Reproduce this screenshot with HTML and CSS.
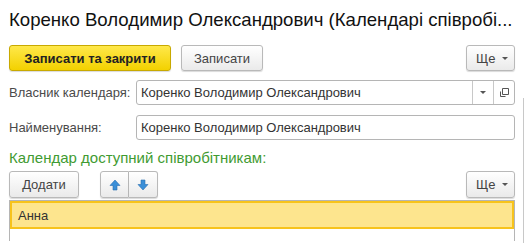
FILE: index.html
```html
<!DOCTYPE html>
<html>
<head>
<meta charset="utf-8">
<link rel="stylesheet" href="styles.css">
</head>
<body>
<div class="page">
  <h1 class="title">Коренко Володимир Олександрович (Календарі співробі...</h1>
  <div class="toolbar">
    <button class="btn btn-primary">Записати та закрити</button>
    <button class="btn btn-save">Записати</button>
    <span class="spacer"></span>
    <button class="btn btn-more">Ще <span class="caret"></span></button>
  </div>
  <div class="form">
    <div class="field">
      <label class="label">Власник календаря:</label>
      <div class="input">
        <span class="value">Коренко Володимир Олександрович</span>
        <span class="seg"><span class="caret"></span></span>
        <span class="seg"><svg width="11" height="11" viewBox="0 0 11 11"><path d="M3.5 1.5h6v6h-6z M1.5 4.5v5h5" fill="none" stroke="#555" stroke-width="1"/></svg></span>
      </div>
    </div>
    <div class="field">
      <label class="label">Найменування:</label>
      <div class="input">
        <span class="value">Коренко Володимир Олександрович</span>
      </div>
    </div>
  </div>
  <div class="group-title">Календар доступний співробітникам:</div>
  <div class="toolbar toolbar2">
    <button class="btn btn-add">Додати</button>
    <div class="btn-group">
      <button class="btn btn-icon"><svg width="12" height="12" viewBox="0 0 12 12"><path d="M6 1L11 6.5H8V11H4V6.5H1z" fill="#3a8fd8" stroke="#2a6fb0" stroke-width="0.6"/></svg></button>
      <button class="btn btn-icon"><svg width="12" height="12" viewBox="0 0 12 12"><path d="M6 11L11 5.5H8V1H4V5.5H1z" fill="#3a8fd8" stroke="#2a6fb0" stroke-width="0.6"/></svg></button>
    </div>
    <span class="spacer"></span>
    <button class="btn btn-more">Ще <span class="caret"></span></button>
  </div>
  <div class="table">
    <div class="row selected">Анна</div>
    <div class="row"></div>
  </div>
</div>
<div class="scrollline"></div>
</body>
</html>
```
FILE: styles.css
```css
html, body {
  margin: 0;
  padding: 0;
  background: #fff;
  font-family: "Liberation Sans", Arial, sans-serif;
  font-size: 13px;
  color: #333;
  overflow: hidden;
}
.page {
  width: 506px;
  padding: 0 10px 0 9px;
  position: relative;
}
.scrollline {
  position: absolute;
  left: 523px;
  top: 98px;
  width: 1px;
  height: 145px;
  background: #c8c8c8;
}
.title {
  margin: 0;
  padding-top: 9px;
  font-size: 18.6px;
  font-weight: normal;
  color: #111;
  line-height: 22px;
  white-space: nowrap;
}
.toolbar {
  display: flex;
  align-items: center;
  margin-top: 14px;
  height: 26px;
}
.spacer { flex: 1; }
.btn {
  font-family: "Liberation Sans", Arial, sans-serif;
  font-size: 13px;
  height: 26px;
  box-sizing: border-box;
  border: 1px solid #b9b9b9;
  border-radius: 3px;
  background: linear-gradient(#ffffff, #eaeaea);
  box-shadow: 0 1px 1px rgba(0,0,0,0.15);
  color: #444;
  padding: 0 12px;
  cursor: default;
}
.btn-primary {
  width: 162px;
  background: linear-gradient(#ffe84a, #f3d100);
  border-color: #c8a900;
  font-weight: bold;
  color: #222;
}
.btn-save {
  width: 82px;
  margin-left: 10px;
}
.btn-more {
  width: 49px;
  padding: 0 6px 0 9px;
  display: flex;
  align-items: center;
  justify-content: space-between;
}
.caret {
  display: inline-block;
  width: 0;
  height: 0;
  border-left: 3px solid transparent;
  border-right: 3px solid transparent;
  border-top: 3px solid #555;
}
.form {
  margin-top: 9px;
  display: flex;
  flex-direction: column;
  gap: 10px;
}
.field {
  display: flex;
  align-items: center;
  height: 25px;
}
.label {
  width: 127px;
  color: #4a4a4a;
  white-space: nowrap;
}
.input {
  flex: 1;
  height: 25px;
  box-sizing: border-box;
  border: 1px solid #b5b5b5;
  border-radius: 3px;
  display: flex;
  align-items: stretch;
  background: #fff;
}
.value {
  flex: 1;
  padding-left: 4px;
  line-height: 23px;
  color: #333;
}
.seg {
  width: 20px;
  border-left: 1px solid #c8c8c8;
  display: flex;
  align-items: center;
  justify-content: center;
}
.group-title {
  margin-top: 9px;
  font-size: 15px;
  color: #3f9b32;
  line-height: 18px;
}
.toolbar2 {
  margin-top: 4px;
  height: 27px;
}
.toolbar2 .btn { height: 27px; }
.btn-add {
  width: 70px;
}
.btn-group {
  display: flex;
  margin-left: 21px;
}
.btn-icon {
  width: 29px;
  padding: 0;
  display: flex;
  align-items: center;
  justify-content: center;
}
.btn-group .btn-icon:first-child {
  border-radius: 3px 0 0 3px;
}
.btn-group .btn-icon:last-child {
  border-radius: 0 3px 3px 0;
  border-left: none;
}
.table {
  margin-top: 2px;
  border: 1px solid #b5b5b5;
  border-bottom: none;
  height: 40px;
}
.row {
  height: 28px;
  box-sizing: border-box;
  border-bottom: 1px solid #e4e4e4;
  padding-left: 8px;
  line-height: 26px;
}
.row.selected {
  background: #fde58e;
  border: 2px solid #f7c31c;
  padding-left: 6px;
  color: #333;
}
```
